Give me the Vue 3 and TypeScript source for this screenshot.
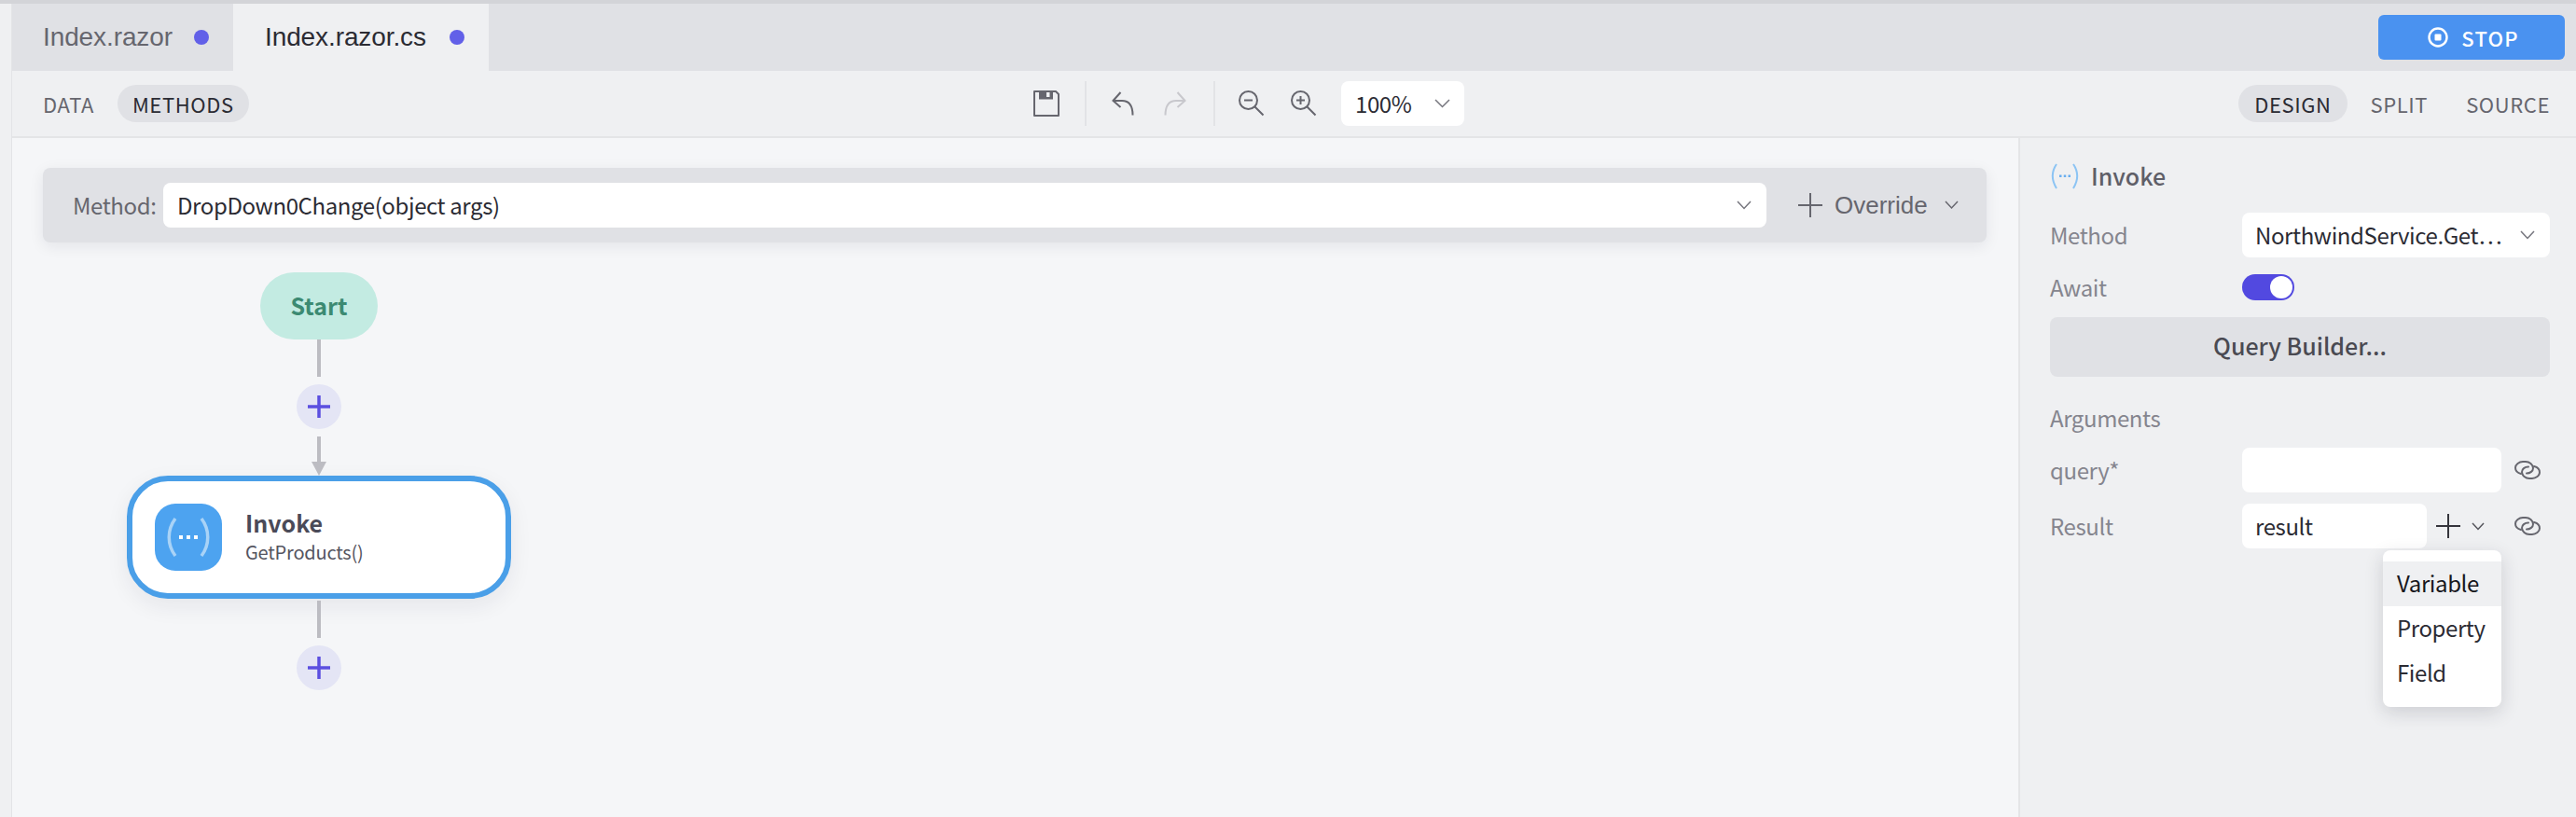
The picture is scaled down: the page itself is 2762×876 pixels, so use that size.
<script setup lang="ts">
const menuItems: string[] = ['Variable', 'Property', 'Field']
</script>

<template>
  <div class="app">
    <div class="side-strip"></div>
    <div class="shell">
      <header class="tabs">
        <div class="tab"><span>Index.razor</span><i class="dot"></i></div>
        <div class="tab active"><span>Index.razor.cs</span><i class="dot"></i></div>
        <button class="stop">
          <svg width="22" height="22" viewBox="0 0 22 22"><circle cx="11" cy="11" r="9.500" fill="none" stroke="#fff" stroke-width="2.400"/><rect x="7.500" y="7.500" width="7" height="7" rx="1" fill="#fff"/></svg>
          <span>STOP</span>
        </button>
      </header>

      <div class="toolbar">
        <div class="tool-left">
          <span class="pill">DATA</span>
          <span class="pill on">METHODS</span>
        </div>
        <div class="tool-center">
          <svg class="ic save" width="28" height="28" viewBox="0 0 28 28"><path d="M1 1h23l3 3v23h-26z" fill="none" stroke="#66666e" stroke-width="2" stroke-linejoin="round"/><path d="M6 1h15v8.500h-15z" fill="#66666e"/><rect x="14" y="2" width="3.500" height="5" fill="#eff0f2"/></svg>
          <i class="sep s1"></i>
          <svg class="ic undo" width="25" height="26" viewBox="0 0 25 26"><path d="M9.500 1L1.500 10l8 7M1.500 10H11c7 0 11.500 5 11.500 15.500" fill="none" stroke="#66666e" stroke-width="2"/></svg>
          <svg class="ic redo" width="25" height="26" viewBox="0 0 25 26"><path d="M15.500 1l8 9-8 7M23.500 10H14C7 10 2.500 15 2.500 25.500" fill="none" stroke="#c8c8cd" stroke-width="2"/></svg>
          <i class="sep s2"></i>
          <svg class="ic zm" width="28" height="28" viewBox="0 0 28 28"><circle cx="10.500" cy="10.500" r="9.500" fill="none" stroke="#66666e" stroke-width="2"/><path d="M6 10.500h9M17.500 17.500l9 9" fill="none" stroke="#66666e" stroke-width="2"/></svg>
          <svg class="ic zp" width="28" height="28" viewBox="0 0 28 28"><circle cx="10.500" cy="10.500" r="9.500" fill="none" stroke="#66666e" stroke-width="2"/><path d="M6 10.500h9M10.500 6v9M17.500 17.500l9 9" fill="none" stroke="#66666e" stroke-width="2"/></svg>
          <div class="zoom-select">
            <span>100%</span>
            <svg class="chev" width="17" height="10" viewBox="0 0 17 10"><path d="M1 1l7.500 7.500 7.500-7.500" fill="none" stroke="#76767e" stroke-width="1.500"/></svg>
          </div>
        </div>
        <div class="tool-right">
          <span class="pill on">DESIGN</span>
          <span class="pill">SPLIT</span>
          <span class="pill">SOURCE</span>
        </div>
      </div>

      <main class="main">
        <section class="canvas">
          <div class="method-bar">
            <span class="method-label">Method:</span>
            <div class="method-select">
              <span>DropDown0Change(object args)</span>
              <svg width="16" height="10" viewBox="0 0 16 10"><path d="M1 1l7 7.500 7-7.500" fill="none" stroke="#76767e" stroke-width="1.500"/></svg>
            </div>
            <div class="override">
              <svg width="26" height="26" viewBox="0 0 26 26"><path d="M13 0v26M0 13h26" stroke="#66666e" stroke-width="2"/></svg>
              <span>Override</span>
              <svg width="15" height="10" viewBox="0 0 15 10"><path d="M1 1l6.500 7 6.500-7" fill="none" stroke="#66666e" stroke-width="1.500"/></svg>
            </div>
          </div>

          <div class="flow">
            <div class="start">Start</div>
            <i class="line first"></i>
            <div class="add"><svg width="24" height="24" viewBox="0 0 24 24"><path d="M12 0v24M0 12h24" stroke="#5b4fe0" stroke-width="3.500"/></svg></div>
            <i class="line arrow"></i>
            <div class="node">
              <div class="node-icon">
                <svg width="72" height="72" viewBox="0 0 72 72"><path d="M22 16C13 28 13 44 22 56M50 16c9 12 9 28 0 40" fill="none" stroke="#a9d3f7" stroke-width="3.500"/><path d="M26 34h4v4h-4zM34 34h4v4h-4zM42 34h4v4h-4z" fill="#fff"/></svg>
              </div>
              <div class="node-text">
                <b>Invoke</b>
                <span>GetProducts()</span>
              </div>
            </div>
            <i class="line last"></i>
            <div class="add"><svg width="24" height="24" viewBox="0 0 24 24"><path d="M12 0v24M0 12h24" stroke="#5b4fe0" stroke-width="3.500"/></svg></div>
          </div>
        </section>

        <aside class="panel">
          <div class="panel-title">
            <svg width="30" height="28" viewBox="0 0 30 28"><path d="M6 1C0.500 9 0.500 18 6 27M24 1c5.500 8 5.500 17 0 26" fill="none" stroke="#8cc4f4" stroke-width="2"/><path d="M9 12.500h2.500v2.500H9zM13.750 12.500h2.500v2.500h-2.500zM18.500 12.500H21v2.500h-2.500z" fill="#6aaef0"/></svg>
            <span>Invoke</span>
          </div>
          <div class="row method-row">
            <label>Method</label>
            <div class="input sel">
              <span>NorthwindService.Get…</span>
              <svg width="16" height="10" viewBox="0 0 16 10"><path d="M1 1l7 7.500 7-7.500" fill="none" stroke="#76767e" stroke-width="1.500"/></svg>
            </div>
          </div>
          <div class="row await-row">
            <label>Await</label>
            <div class="toggle"><i></i></div>
          </div>
          <button class="query">Query Builder...</button>
          <div class="args-title">Arguments</div>
          <div class="row query-row">
            <label>query*</label>
            <div class="input q"></div>
            <svg class="link" width="28" height="20" viewBox="0 0 28 20"><g fill="none" stroke="#66666e" stroke-width="2" stroke-linecap="round"><path d="M7 14C3 13 1 10 1 7.500 1 4 5 1 9 1h3c4 0 8 3 8 7 0 3-3 5.500-7 5.500"/><path d="M21 6c4 1 6 4 6 6.500 0 3.500-4 6.500-8 6.500h-3c-4 0-8-3-8-7 0-3 3-5.500 7-5.500"/></g></svg>
          </div>
          <div class="row result-row">
            <label>Result</label>
            <div class="input r">result</div>
            <svg class="plus" width="26" height="26" viewBox="0 0 26 26"><path d="M13 0v26M0 13h26" stroke="#35353c" stroke-width="2"/></svg>
            <svg class="rchev" width="14" height="9" viewBox="0 0 14 9"><path d="M1 1l6 6.500 6-6.500" fill="none" stroke="#55555c" stroke-width="1.500"/></svg>
            <svg class="link l2" width="28" height="20" viewBox="0 0 28 20"><g fill="none" stroke="#66666e" stroke-width="2" stroke-linecap="round"><path d="M7 14C3 13 1 10 1 7.500 1 4 5 1 9 1h3c4 0 8 3 8 7 0 3-3 5.500-7 5.500"/><path d="M21 6c4 1 6 4 6 6.500 0 3.500-4 6.500-8 6.500h-3c-4 0-8-3-8-7 0-3 3-5.500 7-5.500"/></g></svg>
            <ul class="menu">
              <li v-for="(m, i) in menuItems" :key="m" :class="{ hover: i === 0 }">{{ m }}</li>
            </ul>
          </div>
        </aside>
      </main>
    </div>
  </div>
</template>

<style>
html, body { margin: 0; padding: 0; background: #eff0f2; }
</style>

<style scoped>
.app {
  width: 2762px; height: 876px; display: flex; overflow: hidden; box-sizing: border-box;
  border-top: 4px solid #d3d4d8; background: #eff0f2;
  font-family: "Noto Sans CJK JP", "Noto Sans", sans-serif; color: #2b2b33; letter-spacing: -0.4px;
}
.side-strip { width: 13px; box-sizing: border-box; flex: none; border-right: 1px solid #e3e4e7; }
.shell { flex: 1; display: flex; flex-direction: column; min-width: 0; }

.tabs { height: 72px; flex: none; background: #e0e1e5; display: flex; align-items: stretch; }
.tab { display: flex; align-items: center; gap: 23px; padding-left: 33px; width: 237px; box-sizing: border-box;
  font: 28px/1 "Liberation Sans", sans-serif; color: #66666e; letter-spacing: -0.1px; }
.tab.active { width: 274px; padding-left: 34px; gap: 25px; background: #eff0f2; color: #2b2b33; }
.dot { width: 16px; height: 16px; border-radius: 50%; background: #6260e8; flex: none; }
.stop { margin: 12px 12px 8px auto; width: 200px; height: 48px; border: 0; border-radius: 6px; background: #4a92f0;
  display: flex; align-items: center; justify-content: center; gap: 14px; padding: 0 0 0 4px; color: #fff;
  font: 500 22px/1 "Noto Sans CJK JP", sans-serif; letter-spacing: 1.200px; }

.toolbar { height: 72px; box-sizing: border-box; flex: none; display: flex; align-items: center; border-bottom: 2px solid #e4e5e7; background: #eff0f2; }
.tool-left { flex: 0 0 1095px; display: flex; align-items: center; gap: 9px; padding-left: 17px; box-sizing: border-box; }
.tool-center { display: flex; align-items: center; height: 48px; }
.tool-right { margin-left: auto; margin-right: 12px; display: flex; align-items: center; gap: 9px; }
.pill { font-size: 22px; line-height: 40px; height: 40px; padding: 0 16px; border-radius: 20px; letter-spacing: 0.6px; color: #66666e; }
.pill.on { background: #e0e1e5; color: #2b2b33; }
.tool-right .pill.on { padding: 0 17px; }

.sep { display: block; width: 2px; height: 48px; background: #e2e3e6; flex: none; }
.ic { flex: none; display: block; }
.s1 { margin-left: 27px; }
.undo { margin-left: 27px; }
.redo { margin-left: 30px; }
.s2 { margin-left: 29px; }
.zm { margin-left: 25px; }
.zp { margin-left: 28px; }
.zoom-select { margin-left: 26px; width: 132px; height: 48px; box-sizing: border-box; background: #fff; border-radius: 8px;
  display: flex; align-items: center; padding: 0 15px; justify-content: space-between; font-size: 24px; line-height: 1; }

.main { flex: 1; display: flex; min-height: 0; }
.canvas { flex: 1; background: #f5f6f8; min-width: 0; padding: 32px 34px 0 33px; box-sizing: border-box; }
.method-bar { height: 80px; background: #e0e1e5; border-radius: 8px; display: flex; align-items: center; padding-left: 32px;
  box-shadow: 0 4px 16px rgba(30, 30, 50, 0.08); }
.method-label { font-size: 24px; color: #66666e; width: 97px; flex: none; line-height: 1; }
.method-select { flex: 1; height: 48px; background: #fff; border-radius: 8px; display: flex; align-items: center; justify-content: space-between;
  padding: 0 16px 0 15px; box-sizing: border-box; font-size: 24px; line-height: 1; min-width: 0; }
.override { flex: none; width: 236px; box-sizing: border-box; padding-left: 34px; display: flex; align-items: center; gap: 13px;
  font: 26px/1 "Liberation Sans", sans-serif; color: #66666e; letter-spacing: 0; }
.override svg:last-child { margin-left: 5px; }

.flow { width: 412px; margin: 32px 0 0 90px; display: flex; flex-direction: column; align-items: center; }
.start { width: 126px; height: 72px; box-sizing: border-box; padding-bottom: 2px; border-radius: 36px; background: #c3ebe2; color: #3c8a72; display: flex; align-items: center; justify-content: center;
  font-weight: 700; font-size: 25px; line-height: 1; letter-spacing: 0; }
.line { display: block; width: 4px; background: #bcbcc2; flex: none; }
.line.first { height: 40px; }
.add { width: 48px; height: 48px; border-radius: 50%; background: #e4e5f5; display: flex; align-items: center; justify-content: center; margin-top: 8px; flex: none; }
.line.arrow { height: 28px; margin-top: 8px; position: relative; margin-bottom: 14px; }
.line.arrow::after { content: ""; position: absolute; left: -6px; top: 27px; border-left: 8px solid transparent; border-right: 8px solid transparent; border-top: 15px solid #bcbcc2; }
.node { width: 412px; height: 132px; box-sizing: border-box; border: 6px solid #4a9fe8; border-radius: 44px; background: #fff; display: flex; align-items: center;
  padding-left: 24px; box-shadow: 0 8px 24px rgba(30, 30, 50, 0.07); flex: none; }
.node-icon { width: 72px; height: 72px; border-radius: 22px; background: #4da3f0; flex: none; }
.node-icon svg { display: block; }
.node-text { margin-left: 25px; display: flex; flex-direction: column; }
.node-text b { font-size: 25px; line-height: 30px; font-weight: 700; color: #4a4a58; letter-spacing: 0; margin-top: -2px; }
.node-text span { font-size: 20px; line-height: 26px; color: #55555f; margin-top: 4px; letter-spacing: -0.2px; }
.line.last { height: 40px; margin-top: 2px; }

.panel { width: 598px; flex: none; box-sizing: border-box; border-left: 2px solid #e4e5e7; background: #eff0f2; padding: 26px 28px 0 32px; }
.panel-title { display: flex; align-items: center; gap: 13px; height: 30px; padding-left: 1px; font-size: 25px; font-weight: 500; color: #5f5f68; line-height: 1; letter-spacing: 0; }
.panel-title span { padding-bottom: 1px; }
.row { display: flex; align-items: center; position: relative; }
.row label { width: 206px; flex: none; font-size: 24px; line-height: 1; color: #85858e; }
.input { background: #fff; border-radius: 8px; height: 48px; box-sizing: border-box; display: flex; align-items: center; font-size: 24px; line-height: 1; padding: 0 15px 0 14px; }
.method-row { margin-top: 24px; }
.sel { width: 330px; justify-content: space-between; padding-right: 16px; white-space: nowrap; }
.await-row { margin-top: 18px; height: 28px; }
.toggle { width: 56px; height: 28px; box-sizing: border-box; background: #5249e0; border-radius: 14px; position: relative; }
.toggle i { position: absolute; right: 2px; top: 2px; width: 24px; height: 24px; border-radius: 50%; background: #fff; }
.query { margin-top: 18px; width: 536px; height: 64px; display: block; border: 0; padding: 0 0 3px; border-radius: 8px; background: #e0e1e5; color: #4a4a52;
  font: 500 25px/1 "Noto Sans CJK JP", sans-serif; }
.args-title { margin-top: 30px; font-size: 24px; line-height: 28px; color: #85858e; }
.query-row { margin-top: 18px; }
.q { width: 278px; }
.link { margin-left: 14px; flex: none; }
.result-row { margin-top: 12px; }
.r { width: 198px; }
.plus { margin-left: 10px; flex: none; }
.rchev { margin-left: 12px; flex: none; }
.l2 { margin-left: 32px; }
.menu { position: absolute; left: 357px; top: 50px; width: 127px; height: 168px; margin: 0; padding: 12px 0; box-sizing: border-box; list-style: none; background: #fff;
  border-radius: 8px; box-shadow: 0 6px 20px rgba(30, 30, 50, 0.16); z-index: 2; }
.menu li { height: 48px; line-height: 46px; padding-left: 15px; font-size: 24px; color: #2b2b33; }
.menu li.hover { background: #eff0f2; color: #17171c; }
</style>
